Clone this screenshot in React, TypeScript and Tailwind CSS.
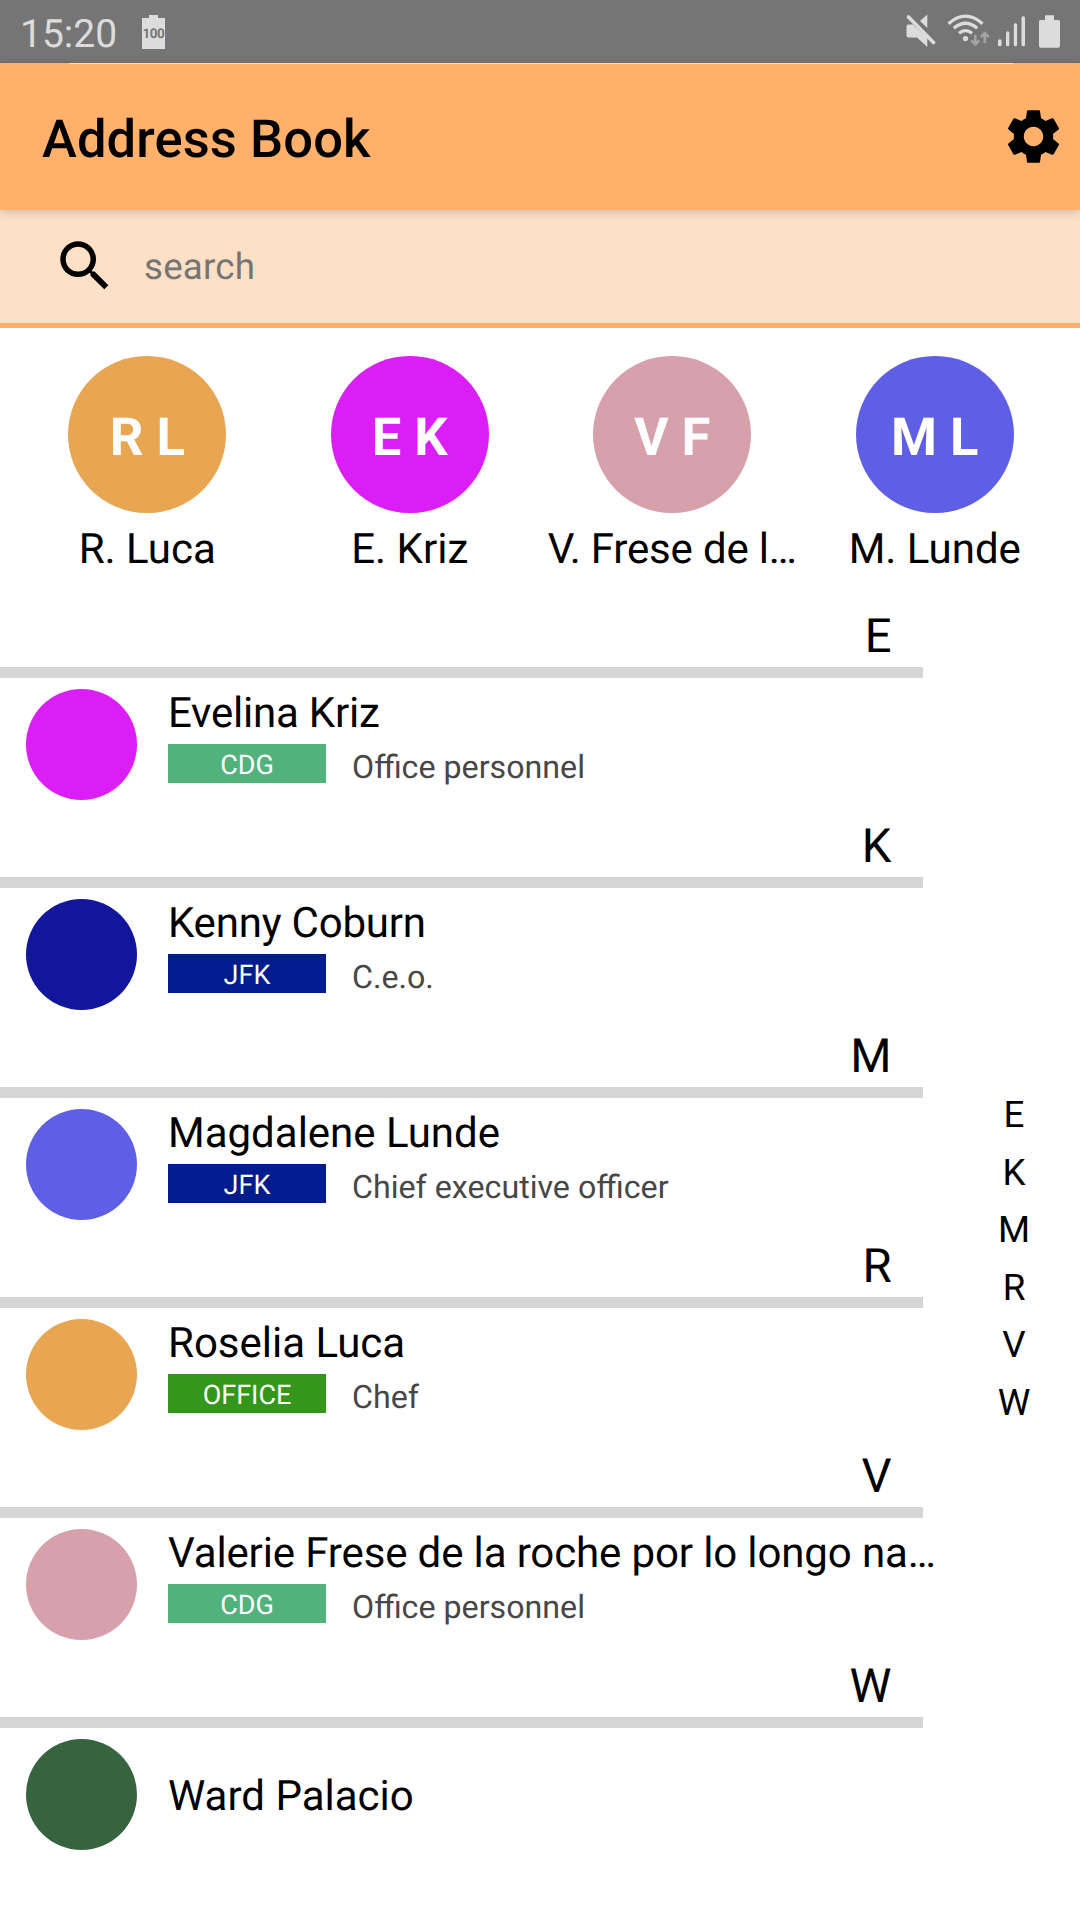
import React from "react";

const favorites = [
  { initials: "R L", name: "R. Luca", color: "bg-[#e8a552]", spacing: "" },
  { initials: "E K", name: "E. Kriz", color: "bg-[#da1ef5]", spacing: "" },
  { initials: "V F", name: "V. Frese de l…", color: "bg-[#d7a1ac]", spacing: "tracking-[-0.17px]" },
  { initials: "M L", name: "M. Lunde", color: "bg-[#5f5fe5]", spacing: "" },
];

const contacts = [
  { letter: "E", name: "Evelina Kriz", spacing: "tracking-[-0.22px]", color: "bg-[#da1ef5]", tag: "CDG", tagColor: "bg-[#51b27b]", role: "Office personnel" },
  { letter: "K", name: "Kenny Coburn", spacing: "tracking-[-0.2px]", color: "bg-[#12169b]", tag: "JFK", tagColor: "bg-[#001c8d]", role: "C.e.o." },
  { letter: "M", name: "Magdalene Lunde", spacing: "", color: "bg-[#5f5fe5]", tag: "JFK", tagColor: "bg-[#001c8d]", role: "Chief executive officer" },
  { letter: "R", name: "Roselia Luca", spacing: "", color: "bg-[#e8a552]", tag: "OFFICE", tagColor: "bg-[#34961a]", role: "Chef" },
  { letter: "V", name: "Valerie Frese de la roche por lo longo na…", spacing: "tracking-[-0.13px]", color: "bg-[#d7a1ac]", tag: "CDG", tagColor: "bg-[#51b27b]", role: "Office personnel" },
  { letter: "W", name: "Ward Palacio", spacing: "", color: "bg-[#35643f]" },
];

function BatteryFullLevel() {
  return (
    <div className="relative ml-[25px] mt-[15px] h-[34px] w-[23px]">
      <svg width="23" height="34" viewBox="0 0 23 34">
        <path d="M0 3H7V0H16V3H23V34H0Z" fill="#dcdcdc" />
      </svg>
      <span className="absolute left-[0.5px] top-[11px] text-[13.5px] font-bold leading-4 tracking-[-0.5px] text-[#757575]">100</span>
    </div>
  );
}

function StatusIcons() {
  return (
    <svg width="200" height="63" viewBox="0 0 200 63" fill="#dcdcdc">
      <path d="M26.5 26 27.5 24.5H33L47.3 38V47L37 37.5H28.5Q26.5 37.5 26.5 35.5Z" />
      <path d="M47.3 14.5V28L40 21Z" />
      <path d="M29.5 15 55.5 41.5" stroke="#757575" strokeWidth="3" />
      <path d="M28.5 17 53.5 42.5" stroke="#dcdcdc" strokeWidth="3.6" strokeLinecap="round" />
      <g fill="none" stroke="#dcdcdc" strokeWidth="3.3">
        <path d="M68.5 23.8Q85.5 8.5 102.5 23.8" />
        <path d="M73.8 28.3Q85.5 18.2 97.2 28.3" />
        <path d="M79 33.2Q85.5 28 92 33.2" />
      </g>
      <circle cx="85.5" cy="38.6" r="2.6" />
      <g fill="none" stroke="#a3a3a3" strokeWidth="2.6">
        <path d="M95.3 35V44M91.2 40.3 95.3 44.5 99.4 40.3" />
        <path d="M104.7 43V34M100.6 37.2 104.7 33 108.8 37.2" />
      </g>
      <rect x="118" y="39.3" width="3.6" height="7" rx="1.6" />
      <rect x="126" y="31.3" width="3.3" height="15" rx="1.5" />
      <rect x="133.8" y="23.3" width="3.3" height="23" rx="1.5" />
      <rect x="141.5" y="16.3" width="3.5" height="30" rx="1.5" />
      <path d="M165 15.3H174V20H178.5Q180 20 180 21.5V46Q180 47.7 178.3 47.7H160.7Q159 47.7 159 46V21.5Q159 20 160.5 20H165Z" />
    </svg>
  );
}

function Gear() {
  return (
    <svg width="63" height="63" viewBox="0 0 24 24" className="mr-[15px]">
      <path d="M19.43 12.98c.04-.32.07-.64.07-.98s-.03-.66-.07-.98l2.11-1.65c.19-.15.24-.42.12-.64l-2-3.46c-.12-.22-.39-.3-.61-.22l-2.49 1c-.52-.4-1.08-.73-1.69-.98l-.38-2.65C14.46 2.18 14.25 2 14 2h-4c-.25 0-.46.18-.49.42l-.38 2.65c-.61.25-1.17.59-1.69.98l-2.49-1c-.23-.09-.49 0-.61.22l-2 3.46c-.13.22-.07.49.12.64l2.11 1.65c-.04.32-.07.65-.07.98s.03.66.07.98l-2.11 1.65c-.19.15-.24.42-.12.64l2 3.46c.12.22.39.3.61.22l2.49-1c.52.4 1.08.73 1.69.98l.38 2.65c.03.24.24.42.49.42h4c.25 0 .46-.18.49-.42l.38-2.65c.61-.25 1.17-.59 1.69-.98l2.49 1c.23.09.49 0 .61-.22l2-3.46c.12-.22.07-.49-.12-.64l-2.11-1.65zM12 15.7c-2.04 0-3.7-1.66-3.7-3.7s1.66-3.7 3.7-3.7 3.7 1.66 3.7 3.7-1.66 3.7-3.7 3.7z" />
    </svg>
  );
}

export default function App() {
  return (
    <div className="relative h-[1920px] w-[1080px] overflow-hidden bg-white font-[Roboto,sans-serif] text-black [text-rendering:geometricPrecision]">
      <div className="flex h-[63px] justify-between bg-[#757575]">
        <div className="flex">
          <span className="ml-5 mt-[11px] w-[97px] text-[39px] leading-[46px] text-[#dcdcdc]">15:20</span>
          <BatteryFullLevel />
        </div>
        <StatusIcons />
      </div>

      <header className="relative flex h-[147px] items-center justify-between bg-[#ffb06a] shadow-[0_2px_9px_rgba(0,0,0,0.18)]">
        <div className="absolute left-[69px] top-0 h-px w-[944px] bg-[#fcd9bb]" />
        <h1 className="ml-[42px] mt-[4px] text-[52.5px] font-medium leading-[62px] tracking-[0.1px]">Address Book</h1>
        <Gear />
      </header>

      <div className="flex h-[118px] border-b-[5px] border-[#ffb06a] bg-[#fee0c7]">
        <svg width="66" height="66" viewBox="0 0 24 24" className="ml-[52px] mt-[23px]">
          <path d="M15.5 14h-.79l-.28-.27C15.41 12.59 16 11.11 16 9.5 16 5.91 13.09 3 9.5 3S3 5.91 3 9.5 5.91 16 9.5 16c1.61 0 3.09-.59 4.23-1.57l.27.28v.79l5 4.99L20.49 19l-4.99-5zm-6 0C7.01 14 5 11.99 5 9.5S7.01 5 9.5 5 14 7.01 14 9.5 11.99 14 9.5 14z" />
        </svg>
        <span className="ml-[26px] mt-[35px] text-[36.75px] leading-[44px] tracking-[0.2px] text-[#757575]">search</span>
      </div>

      <section className="grid h-[260px] grid-cols-4 pl-[16px] pr-[14px] pt-7">
        {favorites.map((f) => (
          <div key={f.name} className="flex flex-col items-center">
            <div className={`flex h-[157px] w-[158px] items-center justify-center rounded-full text-[52.5px] font-bold leading-[62px] text-white ${f.color}`}>
              <span className="mt-[4px]">{f.initials}</span>
            </div>
            <span className={`mt-[12px] whitespace-nowrap text-[42px] leading-[50px] ${f.spacing}`}>{f.name}</span>
          </div>
        ))}
      </section>

      <main>
        {contacts.map((c) => (
          <section key={c.letter} className="h-[210px]">
            <div className="h-[90px] w-[923px] border-b-[11px] border-[#d5d5d5] pr-[31.5px] pt-5 text-right text-[47.25px] leading-[56px]">
              {c.letter}
            </div>
            <div className="flex h-[120px] pl-[26px]">
              <div className={`mt-[11px] size-[111px] shrink-0 rounded-full ${c.color}`} />
              <div className="ml-[31px]">
                <div className={`whitespace-nowrap text-[42px] leading-[50px] ${c.spacing} ${c.tag ? "mt-[11px]" : "mt-[44px]"}`}>{c.name}</div>
                {c.tag && (
                  <div className="mt-[5px] flex">
                    <div className={`h-[39px] w-[158px] text-center text-[27px] leading-[43px] text-white ${c.tagColor}`}>{c.tag}</div>
                    <div className="ml-[26px] mt-1 text-[32.2px] leading-[39px] text-[#474747]">{c.role}</div>
                  </div>
                )}
              </div>
            </div>
          </section>
        ))}
      </main>

      <nav className="absolute left-[984px] top-[1086px] w-[60px] text-center text-[36.75px] leading-[57.5px]">
        {contacts.map((c) => (
          <div key={c.letter}>{c.letter}</div>
        ))}
      </nav>
    </div>
  );
}
